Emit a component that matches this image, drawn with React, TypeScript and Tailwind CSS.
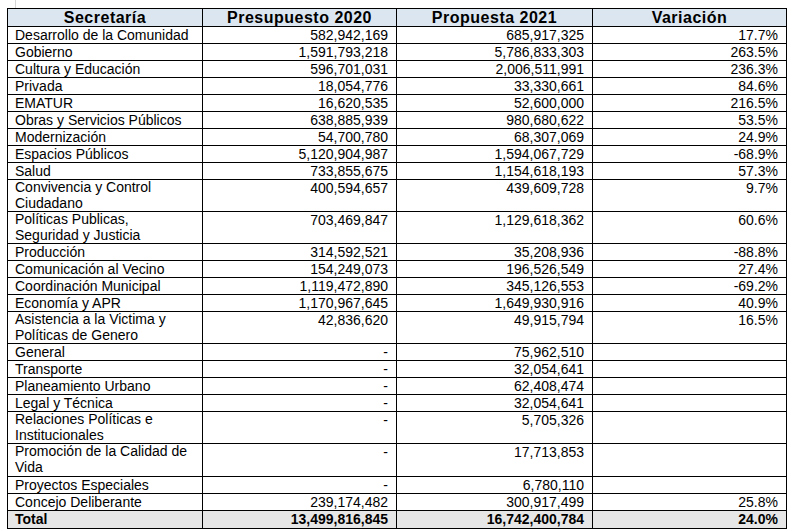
type Row = { name: string[]; p2020: string; p2021: string; v: string; tall?: boolean };

const rows: Row[] = [
  { name: ["Desarrollo de la Comunidad"], p2020: "582,942,169", p2021: "685,917,325", v: "17.7%" },
  { name: ["Gobierno"], p2020: "1,591,793,218", p2021: "5,786,833,303", v: "263.5%" },
  { name: ["Cultura y Educación"], p2020: "596,701,031", p2021: "2,006,511,991", v: "236.3%" },
  { name: ["Privada"], p2020: "18,054,776", p2021: "33,330,661", v: "84.6%" },
  { name: ["EMATUR"], p2020: "16,620,535", p2021: "52,600,000", v: "216.5%" },
  { name: ["Obras y Servicios Públicos"], p2020: "638,885,939", p2021: "980,680,622", v: "53.5%" },
  { name: ["Modernización"], p2020: "54,700,780", p2021: "68,307,069", v: "24.9%" },
  { name: ["Espacios Públicos"], p2020: "5,120,904,987", p2021: "1,594,067,729", v: "-68.9%" },
  { name: ["Salud"], p2020: "733,855,675", p2021: "1,154,618,193", v: "57.3%" },
  { name: ["Convivencia y Control", "Ciudadano"], p2020: "400,594,657", p2021: "439,609,728", v: "9.7%" },
  { name: ["Políticas Publicas,", "Seguridad y Justicia"], p2020: "703,469,847", p2021: "1,129,618,362", v: "60.6%" },
  { name: ["Producción"], p2020: "314,592,521", p2021: "35,208,936", v: "-88.8%" },
  { name: ["Comunicación al Vecino"], p2020: "154,249,073", p2021: "196,526,549", v: "27.4%" },
  { name: ["Coordinación Municipal"], p2020: "1,119,472,890", p2021: "345,126,553", v: "-69.2%" },
  { name: ["Economía y APR"], p2020: "1,170,967,645", p2021: "1,649,930,916", v: "40.9%" },
  { name: ["Asistencia a la Victima y", "Políticas de Genero"], p2020: "42,836,620", p2021: "49,915,794", v: "16.5%" },
  { name: ["General"], p2020: "-", p2021: "75,962,510", v: "" },
  { name: ["Transporte"], p2020: "-", p2021: "32,054,641", v: "" },
  { name: ["Planeamiento Urbano"], p2020: "-", p2021: "62,408,474", v: "" },
  { name: ["Legal y Técnica"], p2020: "-", p2021: "32,054,641", v: "" },
  { name: ["Relaciones Políticas e", "Institucionales"], p2020: "-", p2021: "5,705,326", v: "" },
  { name: ["Promoción de la Calidad de", "Vida"], p2020: "-", p2021: "17,713,853", v: "", tall: true },
  { name: ["Proyectos Especiales"], p2020: "-", p2021: "6,780,110", v: "" },
  { name: ["Concejo Deliberante"], p2020: "239,174,482", p2021: "300,917,499", v: "25.8%" },
];

const headers = ["Secretaría", "Presupuesto 2020", "Propuesta 2021", "Variación"];

export default function App() {
  return (
    <div className="w-[792px] h-[531px] bg-white text-black font-['Liberation_Sans',Arial,sans-serif] overflow-hidden">
      <div className="h-[8px] flex">
        <div className="ml-[15px] w-px h-full bg-[#d6d6d6]" />
      </div>
      <div className="ml-[7px] w-[780px] grid grid-cols-[195px_194px_196px_194px] border-l border-t border-black">
        {headers.map((h) => (
          <div
            key={h}
            className="h-[18px] border-r border-b border-black bg-[#dce6f1] text-center text-[16px] leading-[17px] font-bold tracking-[0.5px]"
          >
            {h}
          </div>
        ))}

        {rows.map((r) => {
          const double = r.name.length > 1;
          const h = r.tall ? "h-[33px]" : double ? "h-[32px]" : "h-[17px]";
          return (
            <div key={r.name.join(" ")} className="contents">
              <div className={`${h} border-r border-b border-black pl-[7px] text-[14px] whitespace-nowrap ${double ? "leading-[15.5px]" : "leading-[16px]"}`}>
                {r.name.map((l) => (
                  <div key={l}>{l}</div>
                ))}
              </div>
              <div className={`${h} border-r border-b border-black pr-[8px] text-right text-[14px] leading-[16px]`}>{r.p2020}</div>
              <div className={`${h} border-r border-b border-black pr-[8px] text-right text-[14px] leading-[16px]`}>{r.p2021}</div>
              <div className={`${h} border-r border-b border-black pr-[8px] text-right text-[14px] leading-[16px]`}>{r.v}</div>
            </div>
          );
        })}

        <div className="h-[18px] border-r border-b border-black bg-[#e7e6e6] pl-[7px] text-[14px] leading-[17px] font-bold">Total</div>
        <div className="h-[18px] border-r border-b border-black bg-[#e7e6e6] pr-[8px] text-right text-[14px] leading-[17px] font-bold">13,499,816,845</div>
        <div className="h-[18px] border-r border-b border-black bg-[#e7e6e6] pr-[8px] text-right text-[14px] leading-[17px] font-bold">16,742,400,784</div>
        <div className="h-[18px] border-r border-b border-black bg-[#e7e6e6] pr-[8px] text-right text-[14px] leading-[17px] font-bold">24.0%</div>
      </div>
    </div>
  );
}
